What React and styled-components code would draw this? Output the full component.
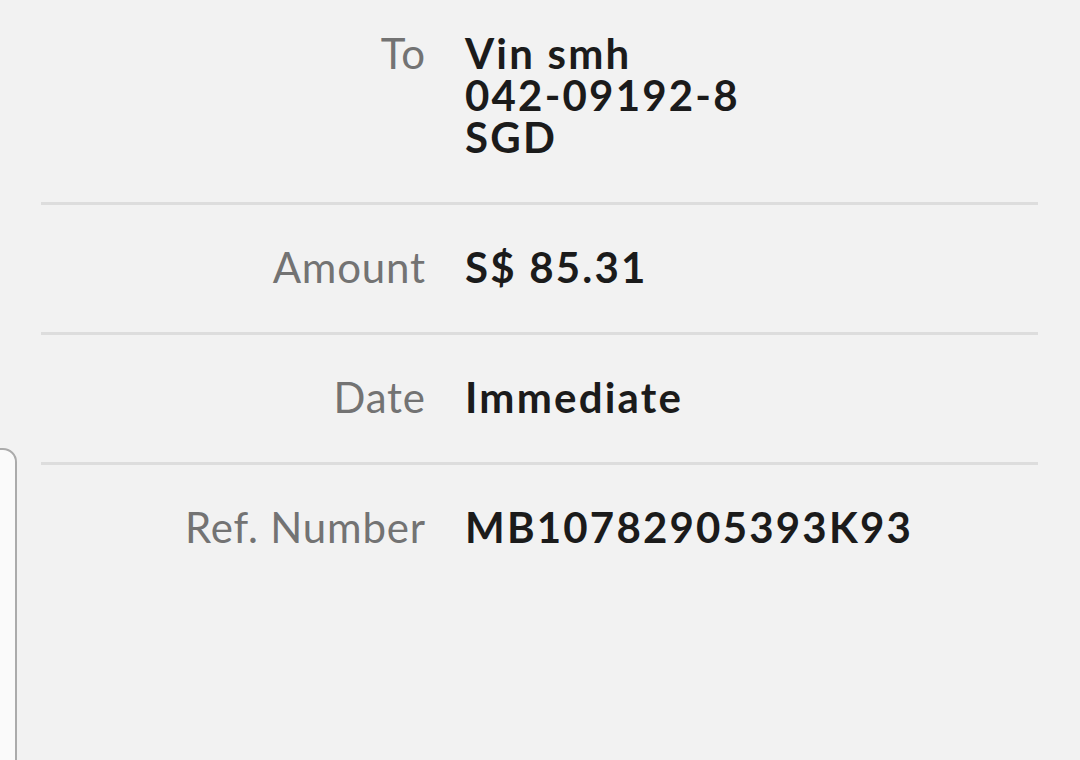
import React from "react";
import styled, { createGlobalStyle } from "styled-components";

const GlobalStyle = createGlobalStyle`
  html, body {
    margin: 0;
    padding: 0;
    background-color: #f2f2f2;
  }
  body {
    font-family: Lato, "Noto Sans", "Liberation Sans", sans-serif;
  }
`;

const Page = styled.div`
  position: relative;
  width: 1080px;
  height: 760px;
  overflow: hidden;
  background-color: #f2f2f2;
`;

const Row = styled.div`
  display: grid;
  grid-template-columns: 425px 1fr;
  column-gap: 40px;
  padding: ${(p) => (p.first ? "32px" : "41px")} 0 44px;
  font-size: 42px;
  line-height: 42px;
`;

const Divider = styled.div`
  height: 3px;
  margin: 0 42px 0 41px;
  background-color: #dddddd;
`;

const Label = styled.div`
  text-align: right;
  color: #737373;
  font-weight: 400;
  letter-spacing: 0.8px;
  margin-right: -0.8px;
`;

const Value = styled.div`
  display: flex;
  flex-direction: column;
  color: #1b1b1b;
  font-weight: 700;
  letter-spacing: 2.2px;
`;

// edge of a sheet peeking in from the left
const SideSheet = styled.div`
  position: absolute;
  left: -20px;
  top: 448px;
  bottom: -20px;
  width: 33px;
  background-color: #fafafa;
  border: 2px solid #ababab;
  border-top-right-radius: 14px;
`;

const rows = [
  { label: "To", value: ["Vin smh", "042-09192-8", "SGD"] },
  { label: "Amount", value: ["S$ 85.31"] },
  { label: "Date", value: ["Immediate"] },
  { label: "Ref. Number", value: ["MB10782905393K93"] },
];

const App = () => {
  return (
    <Page>
      <GlobalStyle />
      {rows.map((each, i) => (
        <React.Fragment key={each.label}>
          {i > 0 ? <Divider /> : null}
          <Row first={i === 0}>
            <Label>{each.label}</Label>
            <Value>
              {each.value.map((line) => (
                <span key={line}>{line}</span>
              ))}
            </Value>
          </Row>
        </React.Fragment>
      ))}
      <SideSheet />
    </Page>
  );
};

export default App;
